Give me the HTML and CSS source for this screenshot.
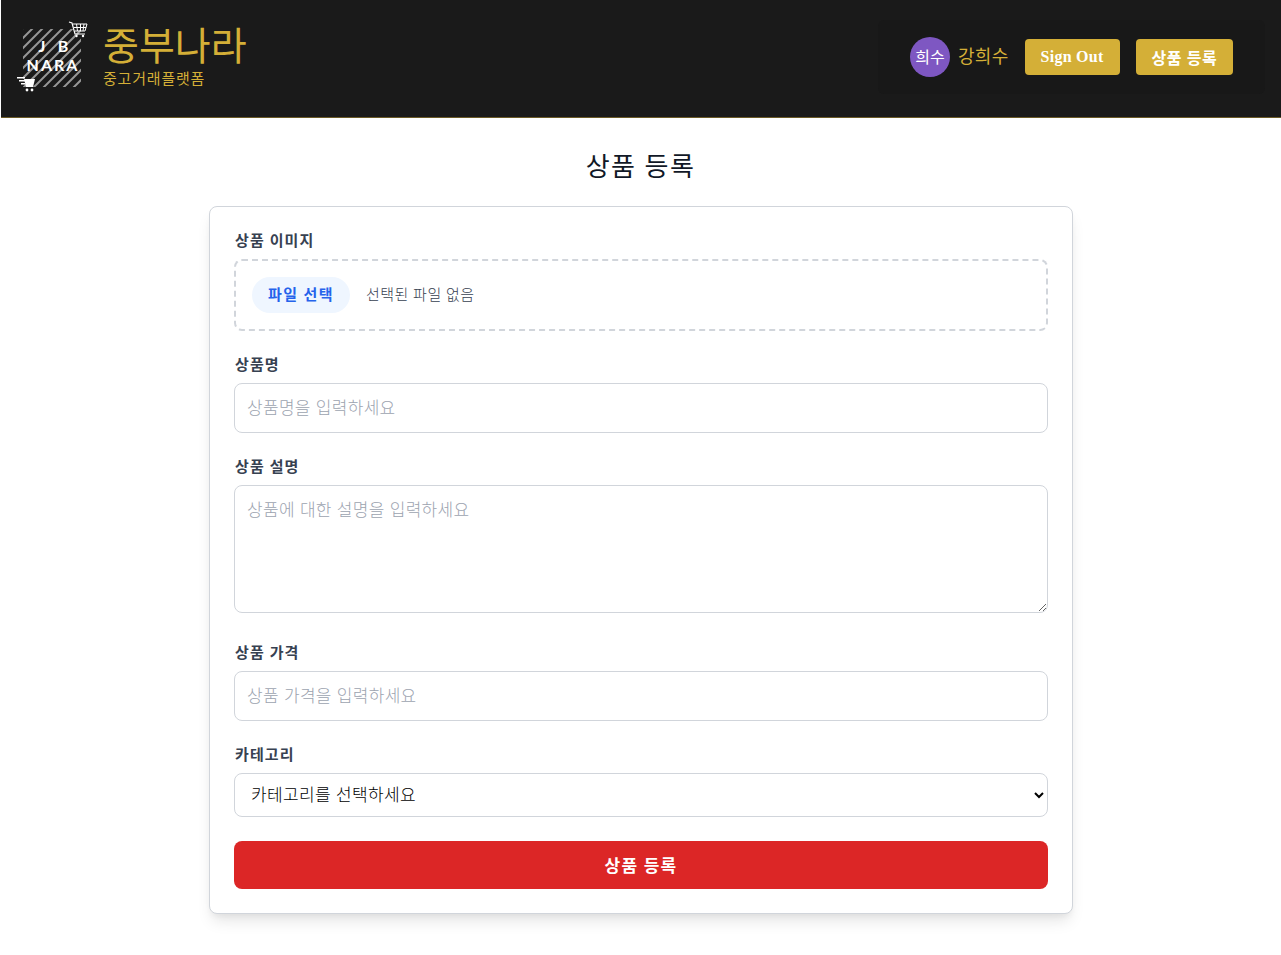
FILE: index.html
```html
<!DOCTYPE html>
<html lang="ko">
<head>
  <meta charset="UTF-8">
  <title>중부나라</title>
  <link rel="stylesheet" href="styles.css">
</head>
<body>

  <header class="site-header">
    <div class="brand">
      <svg class="logo" width="76" height="76" viewBox="0 0 76 76">
        <defs>
          <clipPath id="logo-square"><rect x="7" y="10" width="58" height="58"/></clipPath>
        </defs>
        <g clip-path="url(#logo-square)" stroke="#969696" stroke-width="2">
          <path d="M-4 20 L16 0 M-4 30 L26 0 M-4 40 L36 0 M-4 50 L46 0 M-4 60 L56 0 M-4 70 L66 0 M0 76 L76 0 M10 76 L80 6 M20 76 L80 16 M30 76 L80 26 M40 76 L80 36 M50 76 L80 46 M60 76 L80 56"/>
        </g>
        <text class="logo-text" x="27" y="33" text-anchor="middle">J</text>
        <text class="logo-text" x="48" y="33" text-anchor="middle">B</text>
        <text class="logo-text" x="37" y="52" text-anchor="middle">NARA</text>
        <g fill="none" stroke="#fff">
          <path d="M53 3 L56 4 L59 15 L69 15" stroke-width="1.2"/>
          <path d="M57 5 H71 L69 12 H59 M60.5 5 L61.5 12 M64.5 5 V12 M68 5 L67 12 M58 8.5 H70" stroke-width="1"/>
        </g>
        <circle cx="60.5" cy="17" r="1.2" fill="#fff"/>
        <circle cx="67" cy="17" r="1.2" fill="#fff"/>
        <g fill="#fff">
          <path d="M1 58 H9 V59.5 H1 Z M3 61 H9 V62.5 H3 Z M5 64 H9 V65.5 H5 Z"/>
          <path d="M8 60 H19 L17 68 H10 Z"/>
          <circle cx="11" cy="71" r="1.4"/>
          <circle cx="16" cy="71" r="1.4"/>
        </g>
      </svg>
      <div class="brand-text">
        <div class="brand-name">중부나라</div>
        <div class="brand-sub">중고거래플랫폼</div>
      </div>
    </div>
    <div class="user-panel">
      <div class="avatar">희수</div>
      <span class="user-name">강희수</span>
      <button class="gold-btn sign-out">Sign Out</button>
      <button class="gold-btn">상품 등록</button>
    </div>
  </header>

  <main class="page">
    <h1 class="page-title">상품 등록</h1>

    <form class="card">
      <div class="field">
        <label class="field-label">상품 이미지</label>
        <div class="file-box">
          <span class="file-btn">파일 선택</span>
          <span class="file-status">선택된 파일 없음</span>
        </div>
      </div>

      <div class="field">
        <label class="field-label">상품명</label>
        <input class="text-input" type="text" placeholder="상품명을 입력하세요">
      </div>

      <div class="field field-tall">
        <label class="field-label">상품 설명</label>
        <textarea class="text-input text-area" placeholder="상품에 대한 설명을 입력하세요"></textarea>
      </div>

      <div class="field">
        <label class="field-label">상품 가격</label>
        <input class="text-input" type="text" placeholder="상품 가격을 입력하세요">
      </div>

      <div class="field">
        <label class="field-label">카테고리</label>
        <select class="select-input">
          <option>카테고리를 선택하세요</option>
        </select>
      </div>

      <button class="submit-btn" type="button">상품 등록</button>
    </form>
  </main>

</body>
</html>
```

FILE: styles.css
```css
* {
  box-sizing: border-box;
}

body {
  margin: 0;
  font-family: "Liberation Serif", "Noto Sans CJK KR", serif;
  background: #fff;
  color: #1f2937;
}

.site-header {
  height: 118px;
  margin-left: 1px;
  padding: 0 16px 4px 15px;
  display: flex;
  justify-content: space-between;
  align-items: center;
  background: #1a1a1a;
  border-bottom: 1px solid #6b5a26;
}

.brand {
  display: flex;
  align-items: center;
  gap: 11px;
}

.logo {
  display: block;
}

.logo-text {
  font-family: Lato, sans-serif;
  font-weight: 700;
  font-size: 16px;
  letter-spacing: 2px;
  fill: #fff;
}

.brand-text {
  margin-top: -7px;
}

.brand-name {
  margin-bottom: 3px;
  font-family: "Noto Sans CJK KR", sans-serif;
  font-size: 39px;
  font-weight: 400;
  line-height: 46px;
  color: #d4af37;
}

.brand-sub {
  font-family: "Noto Sans CJK KR", sans-serif;
  font-size: 15px;
  font-weight: 400;
  line-height: 18px;
  letter-spacing: 0.8px;
  color: #d4af37;
}

.user-panel {
  width: 387px;
  height: 74px;
  padding: 0 32px;
  display: flex;
  align-items: center;
  gap: 16px;
  background: #181818;
  border-radius: 6px;
  white-space: nowrap;
}

.avatar {
  flex-shrink: 0;
  width: 40px;
  height: 40px;
  margin-right: -8px;
  padding-bottom: 2px;
  display: flex;
  align-items: center;
  justify-content: center;
  background: #7e57c2;
  border-radius: 50%;
  color: #fff;
  font-family: "Noto Sans CJK KR", sans-serif;
  font-size: 16px;
  font-weight: 400;
}

.user-name {
  flex-shrink: 0;
  padding-bottom: 3px;
  font-family: "Noto Sans CJK KR", sans-serif;
  font-size: 18px;
  font-weight: 400;
  letter-spacing: 0.3px;
  color: #d4af37;
}

.gold-btn {
  flex-shrink: 0;
  height: 36px;
  padding: 0 16px;
  background: #d4af37;
  border: none;
  border-radius: 4px;
  color: #fff;
  font-family: "Liberation Serif", "Noto Sans CJK KR", serif;
  font-size: 16px;
  font-weight: 700;
  letter-spacing: 0.6px;
  white-space: nowrap;
}

.sign-out {
  letter-spacing: 0.25px;
}

.page {
  padding: 30px 0 41px;
}

.page-title {
  margin: 0 0 24px;
  height: 34px;
  text-align: center;
  font-size: 26px;
  font-weight: 400;
  line-height: 40px;
  letter-spacing: 1.5px;
  color: #111827;
}

.card {
  width: 864px;
  margin-left: 209px;
  padding: 24px;
  background: #fff;
  border: 1px solid #d1d5db;
  border-radius: 8px;
  box-shadow: 0 10px 15px -3px rgba(0, 0, 0, 0.1), 0 4px 6px -2px rgba(0, 0, 0, 0.05);
}

.field {
  margin-bottom: 24px;
}

.field-tall {
  margin-bottom: 30px;
}

.field-label {
  display: block;
  height: 20px;
  margin-bottom: 8px;
  padding-left: 1px;
  font-size: 15px;
  font-weight: 700;
  line-height: 20px;
  letter-spacing: 1.1px;
  color: #374151;
}

.file-box {
  height: 72px;
  padding: 0 16px;
  display: flex;
  align-items: center;
  gap: 16px;
  border: 2px dashed #d1d5db;
  border-radius: 8px;
}

.file-btn {
  height: 36px;
  padding: 0 16px 4px;
  display: flex;
  align-items: center;
  background: #eff6ff;
  border-radius: 18px;
  color: #2563eb;
  font-size: 15px;
  font-weight: 700;
  letter-spacing: 1.4px;
}

.file-status {
  padding-bottom: 4px;
  font-size: 15px;
  font-weight: 300;
  letter-spacing: 0.5px;
  color: #374151;
}

.text-input {
  display: block;
  width: 100%;
  height: 50px;
  padding: 10px 12px 14px;
  background: #fff;
  border: 1px solid #d1d5db;
  border-radius: 8px;
  font-family: "Noto Sans CJK KR", sans-serif;
  font-size: 17px;
  font-weight: 300;
  letter-spacing: 0.3px;
  color: #111827;
}

.text-input::placeholder {
  color: #9ca3af;
}

.text-area {
  height: 128px;
}

.select-input {
  display: block;
  width: 100%;
  height: 44px;
  padding: 0 12px 3px;
  background: #fff;
  border: 1px solid #d1d5db;
  border-radius: 8px;
  font-family: "Noto Sans CJK KR", sans-serif;
  font-size: 17px;
  font-weight: 300;
  letter-spacing: 0.35px;
  color: #000;
}

.submit-btn {
  display: block;
  width: 100%;
  height: 48px;
  padding-bottom: 3px;
  background: #dc2626;
  border: none;
  border-radius: 8px;
  color: #fff;
  font-family: "Liberation Serif", "Noto Sans CJK KR", serif;
  font-size: 17px;
  font-weight: 700;
  letter-spacing: 1.2px;
}
```
